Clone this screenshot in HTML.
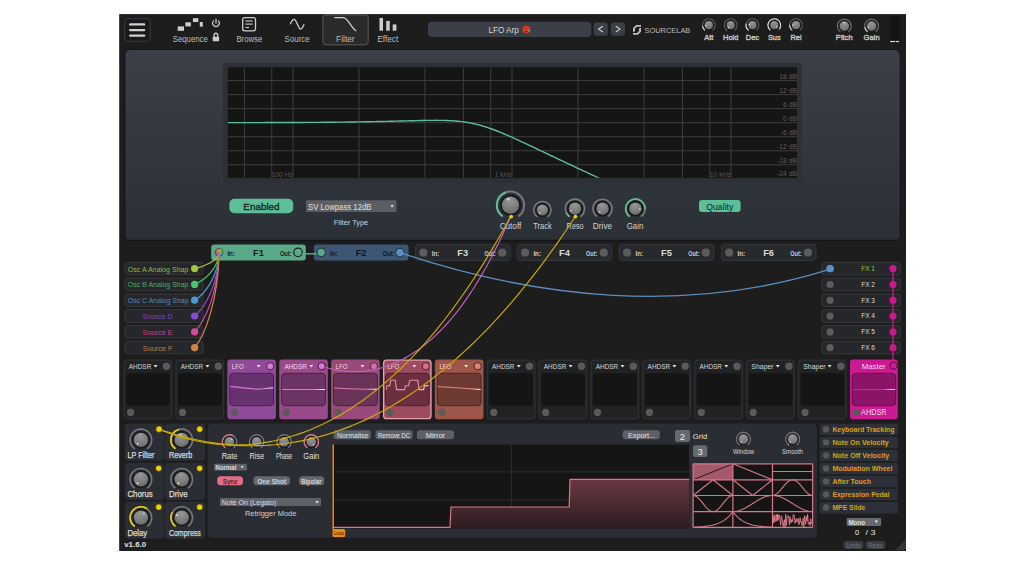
<!DOCTYPE html>
<html><head><meta charset="utf-8"><style>
html,body{margin:0;padding:0;background:#ffffff;width:1024px;height:565px;overflow:hidden}
svg{display:block}
text{font-family:"Liberation Sans",sans-serif}
</style></head><body>
<svg width="1024" height="565" viewBox="0 0 1024 565">
<defs>
<radialGradient id="kg" cx="0.45" cy="0.2" r="0.95"><stop offset="0" stop-color="#969696"/><stop offset="0.6" stop-color="#7a7a7a"/><stop offset="1" stop-color="#5e5e5e"/></radialGradient>
<linearGradient id="pg" x1="0" y1="0" x2="0" y2="1"><stop offset="0" stop-color="#3b3f48"/><stop offset="1" stop-color="#2b2f36"/></linearGradient>
<linearGradient id="stepg" gradientUnits="userSpaceOnUse" x1="0" y1="479" x2="0" y2="528"><stop offset="0" stop-color="#6a3842"/><stop offset="1" stop-color="#2c1c20"/></linearGradient>
<clipPath id="gclip"><rect x="227.8" y="67.3" width="569.2" height="110.5"/></clipPath>
</defs>
<rect x="119.20" y="14.10" width="786.80" height="536.90" rx="0" fill="#1d1d1d" />
<rect x="124.60" y="18.60" width="25.60" height="22.80" rx="3.5" fill="#1a1a1a" stroke="#30343a" stroke-width="1.3" />
<line x1="130.2" y1="24.4" x2="144.1" y2="24.4" stroke="#cfcfcf" stroke-width="2.4" stroke-linecap="round"/>
<line x1="130.2" y1="30.1" x2="144.1" y2="30.1" stroke="#cfcfcf" stroke-width="2.4" stroke-linecap="round"/>
<line x1="130.2" y1="35.6" x2="144.1" y2="35.6" stroke="#cfcfcf" stroke-width="2.4" stroke-linecap="round"/>
<rect x="177.70" y="26.40" width="6.30" height="4.40" rx="0" fill="#cdcdcd" />
<rect x="185.40" y="22.30" width="5.50" height="4.10" rx="0" fill="#cdcdcd" />
<rect x="192.90" y="18.20" width="5.40" height="3.80" rx="0" fill="#cdcdcd" />
<rect x="199.80" y="22.00" width="3.00" height="4.70" rx="0" fill="#cdcdcd" />
<text x="172.70" y="42.00" font-size="8.5" fill="#bebebe" text-anchor="start" font-weight="normal" textLength="35.10" lengthAdjust="spacingAndGlyphs" >Sequence</text>
<path d="M213.6,20.9 A3.3,3.3 0 1 0 218.4,20.9" fill="none" stroke="#cdcdcd" stroke-width="1.2" stroke-linecap="round"/>
<line x1="216" y1="19.2" x2="216" y2="23.2" stroke="#cdcdcd" stroke-width="1.2" stroke-linecap="round"/>
<path d="M214.1,37 V35 A1.8,1.8 0 0 1 217.7,35 V37" fill="none" stroke="#cdcdcd" stroke-width="1.4"/>
<rect x="212.70" y="36.80" width="6.40" height="4.40" rx="0.6" fill="#cdcdcd" />
<rect x="242.70" y="17.60" width="12.80" height="13.20" rx="2" fill="none" stroke="#cdcdcd" stroke-width="1.3" />
<line x1="245.4" y1="21" x2="252.6" y2="21" stroke="#cdcdcd" stroke-width="1.1"/>
<line x1="245.4" y1="24.1" x2="252.6" y2="24.1" stroke="#cdcdcd" stroke-width="1.1"/>
<line x1="245.4" y1="27.5" x2="249" y2="27.5" stroke="#cdcdcd" stroke-width="1.1"/>
<text x="236.40" y="42.00" font-size="8.5" fill="#bebebe" text-anchor="start" font-weight="normal" textLength="25.90" lengthAdjust="spacingAndGlyphs" >Browse</text>
<path d="M290.3,24.3 C291.6,20.8 292.8,19.3 294.2,19.3 C296.4,19.3 298.4,29.2 300.5,29.2 C301.8,29.2 302.9,27.2 304.1,24.3" fill="none" stroke="#cdcdcd" stroke-width="1.3"/>
<text x="284.60" y="42.00" font-size="8.5" fill="#bebebe" text-anchor="start" font-weight="normal" textLength="25.10" lengthAdjust="spacingAndGlyphs" >Source</text>
<rect x="322.90" y="14.90" width="45.30" height="29.90" rx="3" fill="#2a2a2a" stroke="#5b5b5b" stroke-width="1" />
<path d="M334.3,17.6 L343.5,17.6 C348,17.8 351,28 356.3,31" fill="none" stroke="#cdcdcd" stroke-width="1.3"/>
<text x="336.10" y="42.00" font-size="8.5" fill="#bebebe" text-anchor="start" font-weight="normal" textLength="18.50" lengthAdjust="spacingAndGlyphs" >Filter</text>
<rect x="379.50" y="17.90" width="3.50" height="12.80" rx="0" fill="#cdcdcd" />
<rect x="386.20" y="20.90" width="3.50" height="9.80" rx="0" fill="#cdcdcd" />
<rect x="392.70" y="24.40" width="3.70" height="6.30" rx="0" fill="#cdcdcd" />
<text x="377.40" y="42.00" font-size="8.5" fill="#bebebe" text-anchor="start" font-weight="normal" textLength="20.80" lengthAdjust="spacingAndGlyphs" >Effect</text>
<rect x="427.90" y="21.80" width="163.40" height="15.10" rx="4" fill="#3b3f47" />
<text x="488.40" y="32.60" font-size="9" fill="#d6d6d6" text-anchor="start" font-weight="normal" textLength="30.30" lengthAdjust="spacingAndGlyphs" >LFO Arp</text>
<circle cx="526.40" cy="29.60" r="3.80" fill="#e23a16" />
<path d="M524.6,32.2 q1.6,-2.6 3.2,0 z" fill="#401010"/>
<path d="M525,32.3 q1.2,-1.2 2.4,0 z" fill="#f060b0"/>
<circle cx="529.40" cy="30.40" r="0.95" fill="#30c0f0" />
<line x1="524.6" y1="28.3" x2="525.6" y2="28.6" stroke="#401010" stroke-width="0.6"/><line x1="527.9" y1="28.3" x2="526.9" y2="28.6" stroke="#401010" stroke-width="0.6"/>
<rect x="593.60" y="22.50" width="14.30" height="13.20" rx="3" fill="#3b3f47" />
<rect x="610.80" y="22.50" width="14.20" height="13.20" rx="3" fill="#3b3f47" />
<path d="M602.8,26.2 L598.6,29.1 L602.8,32" fill="none" stroke="#d0d0d0" stroke-width="1.1"/>
<path d="M615.8,26.2 L620,29.1 L615.8,32" fill="none" stroke="#d0d0d0" stroke-width="1.1"/>
<path d="M636,25 L641,25 L641,26.8 L636.8,26.8 L635,28.6 L635,31.2 L633,31.9 L633,28 Z" fill="#bdbdbd"/>
<path d="M638.9,28.4 L641,27.7 L641,31.8 L638,34.7 L633,34.7 L633,32.9 L637.2,32.9 L638.9,31.2 Z" fill="#bdbdbd"/>
<text x="644.50" y="32.80" font-size="8" fill="#bcbcbc" text-anchor="start" font-weight="normal" textLength="45.80" lengthAdjust="spacingAndGlyphs" >SOURCELAB</text>
<path d="M705.22,30.32 A6.25,6.25 0 1 1 712.38,30.32" fill="none" stroke="#5a5c60" stroke-width="1.3"/>
<path d="M705.22,30.32 A6.25,6.25 0 0 1 702.57,25.74" fill="none" stroke="#dcdcdc" stroke-width="1.3"/>
<circle cx="708.80" cy="25.20" r="5.60" fill="#18191b" />
<circle cx="708.80" cy="25.20" r="4.10" fill="url(#kg)" />
<circle cx="705.86" cy="25.46" r="0.70" fill="#e8e8e8" />
<text x="708.80" y="39.60" font-size="7.4" fill="#c8c8c8" text-anchor="middle" font-weight="normal" stroke="#c8c8c8" stroke-width="0.35">Att</text>
<path d="M727.12,30.32 A6.25,6.25 0 1 1 734.28,30.32" fill="none" stroke="#5a5c60" stroke-width="1.3"/>
<path d="M727.12,30.32 A6.25,6.25 0 0 1 726.68,29.99" fill="none" stroke="#dcdcdc" stroke-width="1.3"/>
<circle cx="730.70" cy="25.20" r="5.60" fill="#18191b" />
<circle cx="730.70" cy="25.20" r="4.10" fill="url(#kg)" />
<circle cx="728.80" cy="27.46" r="0.70" fill="#e8e8e8" />
<text x="730.70" y="39.60" font-size="7.4" fill="#c8c8c8" text-anchor="middle" font-weight="normal" stroke="#c8c8c8" stroke-width="0.35">Hold</text>
<path d="M748.82,30.32 A6.25,6.25 0 1 1 755.98,30.32" fill="none" stroke="#5a5c60" stroke-width="1.3"/>
<path d="M748.82,30.32 A6.25,6.25 0 0 1 746.36,23.58" fill="none" stroke="#dcdcdc" stroke-width="1.3"/>
<circle cx="752.40" cy="25.20" r="5.60" fill="#18191b" />
<circle cx="752.40" cy="25.20" r="4.10" fill="url(#kg)" />
<circle cx="749.55" cy="24.44" r="0.70" fill="#e8e8e8" />
<text x="752.40" y="39.60" font-size="7.4" fill="#c8c8c8" text-anchor="middle" font-weight="normal" stroke="#c8c8c8" stroke-width="0.35">Dec</text>
<path d="M770.72,30.32 A6.25,6.25 0 1 1 777.88,30.32" fill="none" stroke="#5a5c60" stroke-width="1.3"/>
<path d="M770.72,30.32 A6.25,6.25 0 1 1 779.42,28.78" fill="none" stroke="#dcdcdc" stroke-width="1.3"/>
<circle cx="774.30" cy="25.20" r="5.60" fill="#18191b" />
<circle cx="774.30" cy="25.20" r="4.10" fill="url(#kg)" />
<circle cx="776.72" cy="26.89" r="0.70" fill="#e8e8e8" />
<text x="774.30" y="39.60" font-size="7.4" fill="#c8c8c8" text-anchor="middle" font-weight="normal" stroke="#c8c8c8" stroke-width="0.35">Sus</text>
<path d="M792.42,30.32 A6.25,6.25 0 1 1 799.58,30.32" fill="none" stroke="#5a5c60" stroke-width="1.3"/>
<path d="M792.42,30.32 A6.25,6.25 0 0 1 789.77,24.66" fill="none" stroke="#dcdcdc" stroke-width="1.3"/>
<circle cx="796.00" cy="25.20" r="5.60" fill="#18191b" />
<circle cx="796.00" cy="25.20" r="4.10" fill="url(#kg)" />
<circle cx="793.06" cy="24.94" r="0.70" fill="#e8e8e8" />
<text x="796.00" y="39.60" font-size="7.4" fill="#c8c8c8" text-anchor="middle" font-weight="normal" stroke="#c8c8c8" stroke-width="0.35">Rel</text>
<path d="M840.37,31.71 A6.85,6.85 0 1 1 848.23,31.71" fill="none" stroke="#6a6c70" stroke-width="1.3"/>
<circle cx="844.30" cy="26.10" r="6.00" fill="#18191b" />
<circle cx="844.30" cy="26.10" r="4.80" fill="url(#kg)" />
<circle cx="844.30" cy="22.64" r="0.70" fill="#e8e8e8" />
<text x="844.30" y="40.40" font-size="7.6" fill="#c8c8c8" text-anchor="middle" font-weight="normal" stroke="#c8c8c8" stroke-width="0.35">Pitch</text>
<path d="M867.67,31.71 A6.85,6.85 0 1 1 875.53,31.71" fill="none" stroke="#6a6c70" stroke-width="1.3"/>
<path d="M867.67,31.71 A6.85,6.85 0 0 1 864.85,27.29" fill="none" stroke="#d8d8d8" stroke-width="1.3"/>
<circle cx="871.60" cy="26.10" r="6.00" fill="#18191b" />
<circle cx="871.60" cy="26.10" r="4.80" fill="url(#kg)" />
<circle cx="868.35" cy="27.28" r="0.70" fill="#e8e8e8" />
<text x="871.60" y="40.40" font-size="7.6" fill="#c8c8c8" text-anchor="middle" font-weight="normal" stroke="#c8c8c8" stroke-width="0.35">Gain</text>
<rect x="889.70" y="16.30" width="9.80" height="25.90" rx="0" fill="#141414" />
<rect x="890.20" y="40.90" width="5.10" height="1.20" rx="0" fill="#dcdcdc" />
<rect x="896.00" y="40.90" width="3.00" height="1.20" rx="0" fill="#dcdcdc" />
<rect x="124.40" y="49.00" width="776.30" height="192.20" rx="6" fill="#141518" />
<rect x="125.40" y="50.00" width="774.30" height="190.40" rx="5" fill="url(#pg)" />
<line x1="127" y1="240.3" x2="898" y2="240.3" stroke="#141518" stroke-width="1.2"/>
<rect x="222.90" y="63.00" width="578.90" height="120.30" rx="4" fill="#2d3137" />
<rect x="227.80" y="67.30" width="569.20" height="110.80" rx="0" fill="#151515" />
<line x1="244.42" y1="67.3" x2="244.42" y2="178.1" stroke="#3e3e3e" stroke-width="1"/>
<line x1="271.78" y1="67.3" x2="271.78" y2="178.1" stroke="#3e3e3e" stroke-width="1"/>
<line x1="293.00" y1="67.3" x2="293.00" y2="178.1" stroke="#3e3e3e" stroke-width="1"/>
<line x1="358.93" y1="67.3" x2="358.93" y2="178.1" stroke="#3e3e3e" stroke-width="1"/>
<line x1="424.85" y1="67.3" x2="424.85" y2="178.1" stroke="#3e3e3e" stroke-width="1"/>
<line x1="463.42" y1="67.3" x2="463.42" y2="178.1" stroke="#3e3e3e" stroke-width="1"/>
<line x1="490.78" y1="67.3" x2="490.78" y2="178.1" stroke="#3e3e3e" stroke-width="1"/>
<line x1="512.00" y1="67.3" x2="512.00" y2="178.1" stroke="#3e3e3e" stroke-width="1"/>
<line x1="577.93" y1="67.3" x2="577.93" y2="178.1" stroke="#3e3e3e" stroke-width="1"/>
<line x1="643.85" y1="67.3" x2="643.85" y2="178.1" stroke="#3e3e3e" stroke-width="1"/>
<line x1="682.42" y1="67.3" x2="682.42" y2="178.1" stroke="#3e3e3e" stroke-width="1"/>
<line x1="709.78" y1="67.3" x2="709.78" y2="178.1" stroke="#3e3e3e" stroke-width="1"/>
<line x1="731.00" y1="67.3" x2="731.00" y2="178.1" stroke="#3e3e3e" stroke-width="1"/>
<line x1="227.8" y1="80.60" x2="797" y2="80.60" stroke="#3e3e3e" stroke-width="1"/>
<line x1="227.8" y1="94.63" x2="797" y2="94.63" stroke="#3e3e3e" stroke-width="1"/>
<line x1="227.8" y1="108.66" x2="797" y2="108.66" stroke="#3e3e3e" stroke-width="1"/>
<line x1="227.8" y1="122.69" x2="797" y2="122.69" stroke="#3e3e3e" stroke-width="1"/>
<line x1="227.8" y1="136.72" x2="797" y2="136.72" stroke="#3e3e3e" stroke-width="1"/>
<line x1="227.8" y1="150.75" x2="797" y2="150.75" stroke="#3e3e3e" stroke-width="1"/>
<line x1="227.8" y1="164.78" x2="797" y2="164.78" stroke="#3e3e3e" stroke-width="1"/>
<text x="797.00" y="78.60" font-size="6.8" fill="#5e5e5e" text-anchor="end" font-weight="normal" >18 dB</text>
<text x="797.00" y="92.63" font-size="6.8" fill="#5e5e5e" text-anchor="end" font-weight="normal" >12 dB</text>
<text x="797.00" y="106.66" font-size="6.8" fill="#5e5e5e" text-anchor="end" font-weight="normal" >6 dB</text>
<text x="797.00" y="120.69" font-size="6.8" fill="#5e5e5e" text-anchor="end" font-weight="normal" >0 dB</text>
<text x="797.00" y="134.72" font-size="6.8" fill="#5e5e5e" text-anchor="end" font-weight="normal" >-6 dB</text>
<text x="797.00" y="148.75" font-size="6.8" fill="#5e5e5e" text-anchor="end" font-weight="normal" >-12 dB</text>
<text x="797.00" y="162.78" font-size="6.8" fill="#5e5e5e" text-anchor="end" font-weight="normal" >-18 dB</text>
<text x="797.00" y="176.10" font-size="6.8" fill="#5e5e5e" text-anchor="end" font-weight="normal" >-24 dB</text>
<text x="293.00" y="177.10" font-size="6.8" fill="#575757" text-anchor="end" font-weight="normal" >100 Hz</text>
<text x="512.00" y="177.10" font-size="6.8" fill="#575757" text-anchor="end" font-weight="normal" >1 kHz</text>
<text x="731.00" y="177.10" font-size="6.8" fill="#575757" text-anchor="end" font-weight="normal" >10 kHz</text>
<path d="M227.80,122.64 L229.80,122.63 L231.80,122.63 L233.80,122.63 L235.80,122.63 L237.80,122.62 L239.80,122.62 L241.80,122.62 L243.80,122.62 L245.80,122.61 L247.80,122.61 L249.80,122.61 L251.80,122.60 L253.80,122.60 L255.80,122.59 L257.80,122.59 L259.80,122.59 L261.80,122.58 L263.80,122.58 L265.80,122.57 L267.80,122.57 L269.80,122.56 L271.80,122.56 L273.80,122.55 L275.80,122.54 L277.80,122.54 L279.80,122.53 L281.80,122.53 L283.80,122.52 L285.80,122.51 L287.80,122.50 L289.80,122.50 L291.80,122.49 L293.80,122.48 L295.80,122.47 L297.80,122.46 L299.80,122.45 L301.80,122.44 L303.80,122.43 L305.80,122.42 L307.80,122.41 L309.80,122.40 L311.80,122.38 L313.80,122.37 L315.80,122.36 L317.80,122.34 L319.80,122.33 L321.80,122.31 L323.80,122.30 L325.80,122.28 L327.80,122.27 L329.80,122.25 L331.80,122.23 L333.80,122.21 L335.80,122.19 L337.80,122.17 L339.80,122.15 L341.80,122.13 L343.80,122.10 L345.80,122.08 L347.80,122.06 L349.80,122.03 L351.80,122.00 L353.80,121.98 L355.80,121.95 L357.80,121.92 L359.80,121.89 L361.80,121.86 L363.80,121.82 L365.80,121.79 L367.80,121.75 L369.80,121.72 L371.80,121.68 L373.80,121.64 L375.80,121.60 L377.80,121.56 L379.80,121.52 L381.80,121.48 L383.80,121.43 L385.80,121.39 L387.80,121.34 L389.80,121.29 L391.80,121.25 L393.80,121.20 L395.80,121.15 L397.80,121.09 L399.80,121.04 L401.80,120.99 L403.80,120.94 L405.80,120.89 L407.80,120.83 L409.80,120.78 L411.80,120.73 L413.80,120.68 L415.80,120.63 L417.80,120.58 L419.80,120.53 L421.80,120.49 L423.80,120.45 L425.80,120.42 L427.80,120.38 L429.80,120.36 L431.80,120.34 L433.80,120.33 L435.80,120.32 L437.80,120.33 L439.80,120.34 L441.80,120.37 L443.80,120.41 L445.80,120.47 L447.80,120.54 L449.80,120.63 L451.80,120.74 L453.80,120.87 L455.80,121.02 L457.80,121.20 L459.80,121.41 L461.80,121.64 L463.80,121.90 L465.80,122.20 L467.80,122.52 L469.80,122.88 L471.80,123.27 L473.80,123.70 L475.80,124.16 L477.80,124.65 L479.80,125.18 L481.80,125.74 L483.80,126.33 L485.80,126.96 L487.80,127.61 L489.80,128.29 L491.80,129.00 L493.80,129.74 L495.80,130.49 L497.80,131.27 L499.80,132.08 L501.80,132.90 L503.80,133.73 L505.80,134.58 L507.80,135.45 L509.80,136.33 L511.80,137.22 L513.80,138.12 L515.80,139.03 L517.80,139.94 L519.80,140.86 L521.80,141.79 L523.80,142.73 L525.80,143.66 L527.80,144.60 L529.80,145.55 L531.80,146.49 L533.80,147.44 L535.80,148.39 L537.80,149.34 L539.80,150.29 L541.80,151.24 L543.80,152.19 L545.80,153.14 L547.80,154.10 L549.80,155.05 L551.80,156.00 L553.80,156.94 L555.80,157.89 L557.80,158.84 L559.80,159.79 L561.80,160.73 L563.80,161.68 L565.80,162.62 L567.80,163.56 L569.80,164.50 L571.80,165.44 L573.80,166.38 L575.80,167.32 L577.80,168.26 L579.80,169.19 L581.80,170.13 L583.80,171.06 L585.80,171.99 L587.80,172.92 L589.80,173.85 L591.80,174.78 L593.80,175.71 L595.80,176.63 L597.80,177.56 L599.80,178.48 L601.80,179.41 L603.80,180.10" fill="none" stroke="#5cbf98" stroke-width="1.4" clip-path="url(#gclip)"/>
<rect x="229.40" y="198.70" width="63.80" height="14.60" rx="5" fill="#5cbf98" />
<text x="243.30" y="209.70" font-size="9.8" fill="#15251d" text-anchor="start" font-weight="normal" textLength="36.30" lengthAdjust="spacingAndGlyphs" stroke="#15251d" stroke-width="0.3">Enabled</text>
<rect x="305.90" y="200.20" width="90.50" height="11.80" rx="1" fill="#5b5e63" />
<text x="308.00" y="209.60" font-size="8.5" fill="#e0e0e0" text-anchor="start" font-weight="normal" textLength="63.50" lengthAdjust="spacingAndGlyphs" >SV Lowpass 12dB</text>
<path d="M390.2,205.2 L394,205.2 L392.1,207.6 z" fill="#e8e8e8"/>
<text x="351.00" y="225.20" font-size="7.5" fill="#d0d0d0" text-anchor="middle" font-weight="normal" textLength="34.50" lengthAdjust="spacingAndGlyphs" >Filter Type</text>
<path d="M502.67,216.38 A13.65,13.65 0 1 1 518.33,216.38" fill="none" stroke="#77797d" stroke-width="1.9"/>
<path d="M502.67,216.38 A13.65,13.65 0 0 1 505.83,192.37" fill="none" stroke="#5cbf98" stroke-width="1.9"/>
<circle cx="510.50" cy="205.20" r="10.70" fill="#18191b" />
<circle cx="510.50" cy="205.20" r="8.60" fill="url(#kg)" />
<circle cx="508.38" cy="199.38" r="1.12" fill="#e8e8e8" />
<path d="M537.50,217.00 A8.55,8.55 0 1 1 547.30,217.00" fill="none" stroke="#77797d" stroke-width="1.5"/>
<circle cx="542.40" cy="210.00" r="7.20" fill="#18191b" />
<circle cx="542.40" cy="210.00" r="5.60" fill="url(#kg)" />
<circle cx="539.81" cy="213.09" r="0.73" fill="#e8e8e8" />
<path d="M569.49,216.56 A9.60,9.60 0 1 1 580.51,216.56" fill="none" stroke="#77797d" stroke-width="1.6"/>
<path d="M569.49,216.56 A9.60,9.60 0 0 1 566.52,213.21" fill="none" stroke="#5cbf98" stroke-width="1.6"/>
<circle cx="575.00" cy="208.70" r="8.00" fill="#18191b" />
<circle cx="575.00" cy="208.70" r="6.20" fill="url(#kg)" />
<circle cx="571.06" cy="210.80" r="0.81" fill="#e8e8e8" />
<path d="M597.05,216.48 A9.50,9.50 0 1 1 607.95,216.48" fill="none" stroke="#77797d" stroke-width="1.6"/>
<circle cx="602.50" cy="208.70" r="8.00" fill="#18191b" />
<circle cx="602.50" cy="208.70" r="6.20" fill="url(#kg)" />
<circle cx="599.63" cy="212.12" r="0.81" fill="#e8e8e8" />
<path d="M629.84,216.65 A9.70,9.70 0 1 1 640.96,216.65" fill="none" stroke="#77797d" stroke-width="1.6"/>
<path d="M629.84,216.65 A9.70,9.70 0 1 1 645.06,209.55" fill="none" stroke="#5cbf98" stroke-width="1.6"/>
<circle cx="635.40" cy="208.70" r="8.00" fill="#18191b" />
<circle cx="635.40" cy="208.70" r="6.20" fill="url(#kg)" />
<circle cx="639.85" cy="209.09" r="0.81" fill="#e8e8e8" />
<text x="499.70" y="229.20" font-size="8.5" fill="#d4d4d4" text-anchor="start" font-weight="normal" textLength="21.60" lengthAdjust="spacingAndGlyphs" >Cutoff</text>
<text x="533.30" y="229.20" font-size="8.5" fill="#d4d4d4" text-anchor="start" font-weight="normal" textLength="18.40" lengthAdjust="spacingAndGlyphs" >Track</text>
<text x="566.60" y="229.20" font-size="8.5" fill="#d4d4d4" text-anchor="start" font-weight="normal" textLength="17.10" lengthAdjust="spacingAndGlyphs" >Reso</text>
<text x="592.80" y="229.20" font-size="8.5" fill="#d4d4d4" text-anchor="start" font-weight="normal" textLength="19.40" lengthAdjust="spacingAndGlyphs" >Drive</text>
<text x="626.70" y="229.20" font-size="8.5" fill="#d4d4d4" text-anchor="start" font-weight="normal" textLength="16.70" lengthAdjust="spacingAndGlyphs" >Gain</text>
<rect x="699.00" y="200.00" width="41.60" height="12.00" rx="3" fill="#5cbf98" />
<text x="706.20" y="209.50" font-size="9" fill="#15251d" text-anchor="start" font-weight="normal" textLength="27.20" lengthAdjust="spacingAndGlyphs" >Quality</text>
<rect x="211.20" y="244.40" width="94.60" height="16.10" rx="3" fill="#5aa98a" />
<text x="227.40" y="256.20" font-size="6.5" fill="#102018" text-anchor="start" font-weight="bold" textLength="7.60" lengthAdjust="spacingAndGlyphs" >In:</text>
<text x="258.40" y="256.30" font-size="9.3" fill="#102018" text-anchor="middle" font-weight="bold" >F1</text>
<text x="280.10" y="256.20" font-size="6.5" fill="#102018" text-anchor="start" font-weight="bold" textLength="11.30" lengthAdjust="spacingAndGlyphs" >Out:</text>
<rect x="313.90" y="244.40" width="94.60" height="16.10" rx="3" fill="#3c5674" />
<text x="330.10" y="256.20" font-size="6.5" fill="#101820" text-anchor="start" font-weight="bold" textLength="7.60" lengthAdjust="spacingAndGlyphs" >In:</text>
<text x="361.10" y="256.30" font-size="9.3" fill="#101820" text-anchor="middle" font-weight="bold" >F2</text>
<text x="382.80" y="256.20" font-size="6.5" fill="#101820" text-anchor="start" font-weight="bold" textLength="11.30" lengthAdjust="spacingAndGlyphs" >Out:</text>
<rect x="415.60" y="244.40" width="94.60" height="16.10" rx="3" fill="#27292c" stroke="#34373b" stroke-width="1" />
<text x="431.80" y="256.20" font-size="6.5" fill="#d0d0d0" text-anchor="start" font-weight="bold" textLength="7.60" lengthAdjust="spacingAndGlyphs" >In:</text>
<text x="462.80" y="256.30" font-size="9.3" fill="#d8d8d8" text-anchor="middle" font-weight="bold" >F3</text>
<text x="484.50" y="256.20" font-size="6.5" fill="#d0d0d0" text-anchor="start" font-weight="bold" textLength="11.30" lengthAdjust="spacingAndGlyphs" >Out:</text>
<circle cx="423.40" cy="252.50" r="4.10" fill="#5c5c5c" />
<circle cx="502.20" cy="252.50" r="4.10" fill="#5c5c5c" />
<rect x="517.20" y="244.40" width="94.60" height="16.10" rx="3" fill="#27292c" stroke="#34373b" stroke-width="1" />
<text x="533.40" y="256.20" font-size="6.5" fill="#d0d0d0" text-anchor="start" font-weight="bold" textLength="7.60" lengthAdjust="spacingAndGlyphs" >In:</text>
<text x="564.40" y="256.30" font-size="9.3" fill="#d8d8d8" text-anchor="middle" font-weight="bold" >F4</text>
<text x="586.10" y="256.20" font-size="6.5" fill="#d0d0d0" text-anchor="start" font-weight="bold" textLength="11.30" lengthAdjust="spacingAndGlyphs" >Out:</text>
<circle cx="525.00" cy="252.50" r="4.10" fill="#5c5c5c" />
<circle cx="603.80" cy="252.50" r="4.10" fill="#5c5c5c" />
<rect x="619.30" y="244.40" width="94.60" height="16.10" rx="3" fill="#27292c" stroke="#34373b" stroke-width="1" />
<text x="635.50" y="256.20" font-size="6.5" fill="#d0d0d0" text-anchor="start" font-weight="bold" textLength="7.60" lengthAdjust="spacingAndGlyphs" >In:</text>
<text x="666.50" y="256.30" font-size="9.3" fill="#d8d8d8" text-anchor="middle" font-weight="bold" >F5</text>
<text x="688.20" y="256.20" font-size="6.5" fill="#d0d0d0" text-anchor="start" font-weight="bold" textLength="11.30" lengthAdjust="spacingAndGlyphs" >Out:</text>
<circle cx="627.10" cy="252.50" r="4.10" fill="#5c5c5c" />
<circle cx="705.90" cy="252.50" r="4.10" fill="#5c5c5c" />
<rect x="721.40" y="244.40" width="94.60" height="16.10" rx="3" fill="#27292c" stroke="#34373b" stroke-width="1" />
<text x="737.60" y="256.20" font-size="6.5" fill="#d0d0d0" text-anchor="start" font-weight="bold" textLength="7.60" lengthAdjust="spacingAndGlyphs" >In:</text>
<text x="768.60" y="256.30" font-size="9.3" fill="#d8d8d8" text-anchor="middle" font-weight="bold" >F6</text>
<text x="790.30" y="256.20" font-size="6.5" fill="#d0d0d0" text-anchor="start" font-weight="bold" textLength="11.30" lengthAdjust="spacingAndGlyphs" >Out:</text>
<circle cx="729.20" cy="252.50" r="4.10" fill="#5c5c5c" />
<circle cx="808.00" cy="252.50" r="4.10" fill="#5c5c5c" />
<path d="M219,252.4 L219.00,248.50 A3.9,3.9 0 0 1 222.38,250.45 z" fill="#a4c43c"/>
<path d="M219,252.4 L222.38,250.45 A3.9,3.9 0 0 1 222.38,254.35 z" fill="#4cc46c"/>
<path d="M219,252.4 L222.38,254.35 A3.9,3.9 0 0 1 219.00,256.30 z" fill="#4a9ad4"/>
<path d="M219,252.4 L219.00,256.30 A3.9,3.9 0 0 1 215.62,254.35 z" fill="#8a4ad4"/>
<path d="M219,252.4 L215.62,254.35 A3.9,3.9 0 0 1 215.62,250.45 z" fill="#d44a9a"/>
<path d="M219,252.4 L215.62,250.45 A3.9,3.9 0 0 1 219.00,248.50 z" fill="#d4844a"/>
<circle cx="219.00" cy="252.40" r="3.90" fill="none" stroke="#2a4a3a" stroke-width="0.8" />
<circle cx="298.00" cy="252.40" r="4.30" fill="none" stroke="#102018" stroke-width="1.1" />
<line x1="302.3" y1="253.8" x2="317" y2="253.8" stroke="#5aa98a" stroke-width="1.5"/>
<circle cx="321.20" cy="252.40" r="4.20" fill="#5aa98a" stroke="#22302a" stroke-width="1" />
<circle cx="399.90" cy="252.60" r="4.30" fill="#5b8fc0" stroke="#1a2838" stroke-width="1" />
<rect x="124.90" y="262.40" width="78.20" height="12.40" rx="2.5" fill="#25272b" stroke="#35383c" stroke-width="1" />
<text x="127.80" y="271.60" font-size="7.3" fill="#98b440" text-anchor="start" font-weight="normal" textLength="60.70" lengthAdjust="spacingAndGlyphs" >Osc A Analog Shap</text>
<rect x="124.90" y="278.20" width="78.20" height="12.40" rx="2.5" fill="#25272b" stroke="#35383c" stroke-width="1" />
<text x="127.80" y="287.40" font-size="7.3" fill="#48b068" text-anchor="start" font-weight="normal" textLength="60.70" lengthAdjust="spacingAndGlyphs" >Osc B Analog Shap</text>
<rect x="124.90" y="294.00" width="78.20" height="12.40" rx="2.5" fill="#25272b" stroke="#35383c" stroke-width="1" />
<text x="127.80" y="303.20" font-size="7.3" fill="#4a8cc0" text-anchor="start" font-weight="normal" textLength="60.70" lengthAdjust="spacingAndGlyphs" >Osc C Analog Shap</text>
<rect x="124.90" y="309.80" width="78.20" height="12.40" rx="2.5" fill="#25272b" stroke="#35383c" stroke-width="1" />
<text x="157.60" y="319.00" font-size="7.3" fill="#7c48c0" text-anchor="middle" font-weight="normal" >Source D</text>
<rect x="124.90" y="325.60" width="78.20" height="12.40" rx="2.5" fill="#25272b" stroke="#35383c" stroke-width="1" />
<text x="157.60" y="334.80" font-size="7.3" fill="#c04890" text-anchor="middle" font-weight="normal" >Source E</text>
<rect x="124.90" y="341.40" width="78.20" height="12.40" rx="2.5" fill="#25272b" stroke="#35383c" stroke-width="1" />
<text x="157.60" y="350.60" font-size="7.3" fill="#c07a48" text-anchor="middle" font-weight="normal" >Source F</text>
<rect x="821.80" y="262.40" width="78.60" height="12.50" rx="2.5" fill="#25272b" stroke="#35383c" stroke-width="1" />
<circle cx="830.10" cy="268.70" r="3.60" fill="#5b8fc0" />
<text x="868.10" y="271.00" font-size="6.9" fill="#9bc24a" text-anchor="middle" font-weight="normal" textLength="13.90" lengthAdjust="spacingAndGlyphs" >FX 1</text>
<rect x="821.80" y="278.20" width="78.60" height="12.50" rx="2.5" fill="#25272b" stroke="#35383c" stroke-width="1" />
<circle cx="830.10" cy="284.50" r="3.60" fill="#5c5c5c" />
<text x="868.10" y="286.80" font-size="6.9" fill="#dcdcdc" text-anchor="middle" font-weight="normal" textLength="13.90" lengthAdjust="spacingAndGlyphs" >FX 2</text>
<rect x="821.80" y="294.00" width="78.60" height="12.50" rx="2.5" fill="#25272b" stroke="#35383c" stroke-width="1" />
<circle cx="830.10" cy="300.30" r="3.60" fill="#5c5c5c" />
<text x="868.10" y="302.60" font-size="6.9" fill="#dcdcdc" text-anchor="middle" font-weight="normal" textLength="13.90" lengthAdjust="spacingAndGlyphs" >FX 3</text>
<rect x="821.80" y="309.80" width="78.60" height="12.50" rx="2.5" fill="#25272b" stroke="#35383c" stroke-width="1" />
<circle cx="830.10" cy="316.10" r="3.60" fill="#5c5c5c" />
<text x="868.10" y="318.40" font-size="6.9" fill="#dcdcdc" text-anchor="middle" font-weight="normal" textLength="13.90" lengthAdjust="spacingAndGlyphs" >FX 4</text>
<rect x="821.80" y="325.60" width="78.60" height="12.50" rx="2.5" fill="#25272b" stroke="#35383c" stroke-width="1" />
<circle cx="830.10" cy="331.90" r="3.60" fill="#5c5c5c" />
<text x="868.10" y="334.20" font-size="6.9" fill="#dcdcdc" text-anchor="middle" font-weight="normal" textLength="13.90" lengthAdjust="spacingAndGlyphs" >FX 5</text>
<rect x="821.80" y="341.40" width="78.60" height="12.50" rx="2.5" fill="#25272b" stroke="#35383c" stroke-width="1" />
<circle cx="830.10" cy="347.70" r="3.60" fill="#5c5c5c" />
<text x="868.10" y="350.00" font-size="6.9" fill="#dcdcdc" text-anchor="middle" font-weight="normal" textLength="13.90" lengthAdjust="spacingAndGlyphs" >FX 6</text>
<rect x="124.10" y="360.10" width="47.60" height="58.70" rx="3" fill="#212224" stroke="#333539" stroke-width="1" />
<rect x="126.00" y="373.30" width="43.80" height="32.40" rx="3.5" fill="#151515" />
<circle cx="130.60" cy="412.40" r="3.60" fill="#5a5a5a" />
<circle cx="166.40" cy="366.20" r="3.70" fill="#5a5a5a" />
<text x="128.80" y="368.70" font-size="6.8" fill="#d8d8d8" text-anchor="start" font-weight="normal" textLength="22.50" lengthAdjust="spacingAndGlyphs" >AHDSR</text>
<path d="M153.60,364.9 L157.60,364.9 L155.60,367.6 z" fill="#e0e0e0"/>
<rect x="175.98" y="360.10" width="47.60" height="58.70" rx="3" fill="#212224" stroke="#333539" stroke-width="1" />
<rect x="177.88" y="373.30" width="43.80" height="32.40" rx="3.5" fill="#151515" />
<circle cx="182.48" cy="412.40" r="3.60" fill="#5a5a5a" />
<circle cx="218.28" cy="366.20" r="3.70" fill="#5a5a5a" />
<text x="180.68" y="368.70" font-size="6.8" fill="#d8d8d8" text-anchor="start" font-weight="normal" textLength="22.50" lengthAdjust="spacingAndGlyphs" >AHDSR</text>
<path d="M205.48,364.9 L209.48,364.9 L207.48,367.6 z" fill="#e0e0e0"/>
<rect x="227.36" y="359.60" width="48.60" height="59.70" rx="3" fill="#8f4a9a" />
<rect x="229.76" y="373.30" width="43.80" height="32.40" rx="3.5" fill="#683270" stroke="#3c1c30" stroke-width="0.8" />
<circle cx="234.36" cy="412.40" r="3.60" fill="#585c58" />
<circle cx="270.16" cy="366.20" r="3.60" fill="#d878d8" stroke="#3a1a30" stroke-width="0.9" />
<text x="231.86" y="368.70" font-size="6.8" fill="#f0dce8" text-anchor="start" font-weight="normal" textLength="11.80" lengthAdjust="spacingAndGlyphs" >LFO</text>
<path d="M256.66,364.9 L260.66,364.9 L258.66,367.6 z" fill="#f0e0ea"/>
<defs><linearGradient id="lgm2" gradientUnits="userSpaceOnUse" x1="230.16" x2="273.16" y1="0" y2="0"><stop offset="0" stop-color="#d878d8"/><stop offset="0.75" stop-color="#d878d8"/><stop offset="1" stop-color="#ffffff"/></linearGradient></defs>
<path d="M230.16,386.6 C245.16,387.6 252.16,389.6 260.16,389 S269.16,387.8 273.16,387.8" fill="none" stroke="url(#lgm2)" stroke-width="1.1"/>
<rect x="279.24" y="359.60" width="48.60" height="59.70" rx="3" fill="#9a4a8c" />
<rect x="281.64" y="373.30" width="43.80" height="32.40" rx="3.5" fill="#6c3464" stroke="#3c1c30" stroke-width="0.8" />
<circle cx="286.24" cy="412.40" r="3.60" fill="#585c58" />
<circle cx="322.04" cy="366.20" r="3.60" fill="#d878d0" stroke="#3a1a30" stroke-width="0.9" />
<text x="284.44" y="368.70" font-size="6.8" fill="#f0dce8" text-anchor="start" font-weight="normal" textLength="22.50" lengthAdjust="spacingAndGlyphs" >AHDSR</text>
<path d="M309.24,364.9 L313.24,364.9 L311.24,367.6 z" fill="#f0e0ea"/>
<defs><linearGradient id="lgm3" gradientUnits="userSpaceOnUse" x1="282.04" x2="325.04" y1="0" y2="0"><stop offset="0" stop-color="#d878d0"/><stop offset="0.75" stop-color="#d878d0"/><stop offset="1" stop-color="#ffffff"/></linearGradient></defs>
<path d="M282.04,389.5 L325.04,389.5" fill="none" stroke="url(#lgm3)" stroke-width="1.1"/>
<rect x="331.12" y="359.60" width="48.60" height="59.70" rx="3" fill="#9a4a7a" />
<rect x="333.52" y="373.30" width="43.80" height="32.40" rx="3.5" fill="#6a3458" stroke="#3c1c30" stroke-width="0.8" />
<circle cx="338.12" cy="412.40" r="3.60" fill="#585c58" />
<circle cx="373.92" cy="366.20" r="3.60" fill="#d870a8" stroke="#3a1a30" stroke-width="0.9" />
<text x="335.62" y="368.70" font-size="6.8" fill="#f0dce8" text-anchor="start" font-weight="normal" textLength="11.80" lengthAdjust="spacingAndGlyphs" >LFO</text>
<path d="M360.42,364.9 L364.42,364.9 L362.42,367.6 z" fill="#f0e0ea"/>
<defs><linearGradient id="lgm4" gradientUnits="userSpaceOnUse" x1="333.92" x2="376.92" y1="0" y2="0"><stop offset="0" stop-color="#dc78b0"/><stop offset="0.75" stop-color="#dc78b0"/><stop offset="1" stop-color="#ffffff"/></linearGradient></defs>
<path d="M333.92,388 C348.92,388.7 358.92,389.3 376.92,389.2" fill="none" stroke="url(#lgm4)" stroke-width="1.1"/>
<rect x="383.60" y="360.20" width="47.40" height="58.50" rx="3" fill="#9c4c5e" stroke="#e8a0b0" stroke-width="1.3" />
<rect x="385.40" y="373.30" width="43.80" height="32.40" rx="3.5" fill="#6a3040" stroke="#3c1c30" stroke-width="0.8" />
<circle cx="390.00" cy="412.40" r="3.60" fill="#585c58" />
<circle cx="425.80" cy="366.20" r="3.60" fill="#dc7080" stroke="#3a1a30" stroke-width="0.9" />
<text x="387.50" y="368.70" font-size="6.8" fill="#f0dce8" text-anchor="start" font-weight="normal" textLength="11.80" lengthAdjust="spacingAndGlyphs" >LFO</text>
<path d="M412.30,364.9 L416.30,364.9 L414.30,367.6 z" fill="#f0e0ea"/>
<defs><linearGradient id="lgm5" gradientUnits="userSpaceOnUse" x1="385.80" x2="428.80" y1="0" y2="0"><stop offset="0" stop-color="#e890a0"/><stop offset="0.75" stop-color="#e890a0"/><stop offset="1" stop-color="#ffffff"/></linearGradient></defs>
<path d="M386.1,389.6 L386.9,385.7 L389.7,385.7 L390.9,380.2 L395.2,380.2 L396.6,389.6 L404.6,389.6 L405.4,385.7 L408.5,385.7 L409.8,380.2 L417.8,380.2 L419,389.6 L423.6,389.6 L424.4,385.7 L428.6,385.7" fill="none" stroke="url(#lgm5)" stroke-width="1.1"/>
<rect x="434.88" y="359.60" width="48.60" height="59.70" rx="3" fill="#9e5648" />
<rect x="437.28" y="373.30" width="43.80" height="32.40" rx="3.5" fill="#6c3a32" stroke="#3c1c30" stroke-width="0.8" />
<circle cx="441.88" cy="412.40" r="3.60" fill="#585c58" />
<circle cx="477.68" cy="366.20" r="3.60" fill="#e08270" stroke="#3a1a30" stroke-width="0.9" />
<text x="439.38" y="368.70" font-size="6.8" fill="#f0dce8" text-anchor="start" font-weight="normal" textLength="11.80" lengthAdjust="spacingAndGlyphs" >LFO</text>
<path d="M464.18,364.9 L468.18,364.9 L466.18,367.6 z" fill="#f0e0ea"/>
<defs><linearGradient id="lgm6" gradientUnits="userSpaceOnUse" x1="437.68" x2="480.68" y1="0" y2="0"><stop offset="0" stop-color="#e08878"/><stop offset="0.75" stop-color="#e08878"/><stop offset="1" stop-color="#ffffff"/></linearGradient></defs>
<path d="M437.68,386.5 L480.68,389.5" fill="none" stroke="url(#lgm6)" stroke-width="1.1"/>
<rect x="487.26" y="360.10" width="47.60" height="58.70" rx="3" fill="#212224" stroke="#333539" stroke-width="1" />
<rect x="489.16" y="373.30" width="43.80" height="32.40" rx="3.5" fill="#151515" />
<circle cx="493.76" cy="412.40" r="3.60" fill="#5a5a5a" />
<circle cx="529.56" cy="366.20" r="3.70" fill="#5a5a5a" />
<text x="491.96" y="368.70" font-size="6.8" fill="#d8d8d8" text-anchor="start" font-weight="normal" textLength="22.50" lengthAdjust="spacingAndGlyphs" >AHDSR</text>
<path d="M516.76,364.9 L520.76,364.9 L518.76,367.6 z" fill="#e0e0e0"/>
<rect x="539.14" y="360.10" width="47.60" height="58.70" rx="3" fill="#212224" stroke="#333539" stroke-width="1" />
<rect x="541.04" y="373.30" width="43.80" height="32.40" rx="3.5" fill="#151515" />
<circle cx="545.64" cy="412.40" r="3.60" fill="#5a5a5a" />
<circle cx="581.44" cy="366.20" r="3.70" fill="#5a5a5a" />
<text x="543.84" y="368.70" font-size="6.8" fill="#d8d8d8" text-anchor="start" font-weight="normal" textLength="22.50" lengthAdjust="spacingAndGlyphs" >AHDSR</text>
<path d="M568.64,364.9 L572.64,364.9 L570.64,367.6 z" fill="#e0e0e0"/>
<rect x="591.02" y="360.10" width="47.60" height="58.70" rx="3" fill="#212224" stroke="#333539" stroke-width="1" />
<rect x="592.92" y="373.30" width="43.80" height="32.40" rx="3.5" fill="#151515" />
<circle cx="597.52" cy="412.40" r="3.60" fill="#5a5a5a" />
<circle cx="633.32" cy="366.20" r="3.70" fill="#5a5a5a" />
<text x="595.72" y="368.70" font-size="6.8" fill="#d8d8d8" text-anchor="start" font-weight="normal" textLength="22.50" lengthAdjust="spacingAndGlyphs" >AHDSR</text>
<path d="M620.52,364.9 L624.52,364.9 L622.52,367.6 z" fill="#e0e0e0"/>
<rect x="642.90" y="360.10" width="47.60" height="58.70" rx="3" fill="#212224" stroke="#333539" stroke-width="1" />
<rect x="644.80" y="373.30" width="43.80" height="32.40" rx="3.5" fill="#151515" />
<circle cx="649.40" cy="412.40" r="3.60" fill="#5a5a5a" />
<circle cx="685.20" cy="366.20" r="3.70" fill="#5a5a5a" />
<text x="647.60" y="368.70" font-size="6.8" fill="#d8d8d8" text-anchor="start" font-weight="normal" textLength="22.50" lengthAdjust="spacingAndGlyphs" >AHDSR</text>
<path d="M672.40,364.9 L676.40,364.9 L674.40,367.6 z" fill="#e0e0e0"/>
<rect x="694.78" y="360.10" width="47.60" height="58.70" rx="3" fill="#212224" stroke="#333539" stroke-width="1" />
<rect x="696.68" y="373.30" width="43.80" height="32.40" rx="3.5" fill="#151515" />
<circle cx="701.28" cy="412.40" r="3.60" fill="#5a5a5a" />
<circle cx="737.08" cy="366.20" r="3.70" fill="#5a5a5a" />
<text x="699.48" y="368.70" font-size="6.8" fill="#d8d8d8" text-anchor="start" font-weight="normal" textLength="22.50" lengthAdjust="spacingAndGlyphs" >AHDSR</text>
<path d="M724.28,364.9 L728.28,364.9 L726.28,367.6 z" fill="#e0e0e0"/>
<rect x="746.66" y="360.10" width="47.60" height="58.70" rx="3" fill="#212224" stroke="#333539" stroke-width="1" />
<rect x="748.56" y="373.30" width="43.80" height="32.40" rx="3.5" fill="#151515" />
<circle cx="753.16" cy="412.40" r="3.60" fill="#5a5a5a" />
<circle cx="788.96" cy="366.20" r="3.70" fill="#5a5a5a" />
<text x="751.36" y="368.70" font-size="6.8" fill="#d8d8d8" text-anchor="start" font-weight="normal" textLength="22.30" lengthAdjust="spacingAndGlyphs" >Shaper</text>
<path d="M775.76,364.9 L779.76,364.9 L777.76,367.6 z" fill="#e0e0e0"/>
<rect x="798.54" y="360.10" width="47.60" height="58.70" rx="3" fill="#212224" stroke="#333539" stroke-width="1" />
<rect x="800.44" y="373.30" width="43.80" height="32.40" rx="3.5" fill="#151515" />
<circle cx="805.04" cy="412.40" r="3.60" fill="#5a5a5a" />
<circle cx="840.84" cy="366.20" r="3.70" fill="#5a5a5a" />
<text x="803.24" y="368.70" font-size="6.8" fill="#d8d8d8" text-anchor="start" font-weight="normal" textLength="22.30" lengthAdjust="spacingAndGlyphs" >Shaper</text>
<path d="M827.64,364.9 L831.64,364.9 L829.64,367.6 z" fill="#e0e0e0"/>
<rect x="850.00" y="359.60" width="47.80" height="59.70" rx="3" fill="#cc1a92" />
<rect x="852.20" y="373.30" width="43.40" height="32.40" rx="3.5" fill="#8c1468" stroke="#5a0a40" stroke-width="0.8" />
<defs><linearGradient id="lgmaster" gradientUnits="userSpaceOnUse" x1="852.60" x2="895.20" y1="0" y2="0"><stop offset="0" stop-color="#b03088"/><stop offset="0.72" stop-color="#b83890"/><stop offset="1" stop-color="#ffffff"/></linearGradient></defs>
<line x1="852.60" y1="389.5" x2="895.20" y2="389.5" stroke="url(#lgmaster)" stroke-width="1"/>
<text x="861.70" y="368.80" font-size="8" fill="#f6dcea" text-anchor="start" font-weight="normal" textLength="23.90" lengthAdjust="spacingAndGlyphs" >Master</text>
<circle cx="893.60" cy="365.60" r="3.70" fill="none" stroke="#5a0a40" stroke-width="1" />
<circle cx="856.40" cy="412.60" r="3.70" fill="#5a5a5a" />
<text x="861.10" y="415.00" font-size="8.3" fill="#f6dcea" text-anchor="start" font-weight="normal" textLength="25.40" lengthAdjust="spacingAndGlyphs" >AHDSR</text>
<rect x="124.80" y="423.60" width="39.40" height="37.20" rx="4" fill="#2a2d33" />
<path d="M134.71,448.75 A10.80,10.80 0 1 1 147.09,448.75" fill="none" stroke="#76787c" stroke-width="1.6"/>
<circle cx="140.90" cy="439.90" r="8.80" fill="#18191b" />
<circle cx="140.90" cy="439.90" r="7.20" fill="url(#kg)" />
<circle cx="137.57" cy="443.87" r="0.94" fill="#e8e8e8" />
<circle cx="158.70" cy="429.20" r="3.10" fill="#f0d000" stroke="#1a1a10" stroke-width="0.5" />
<rect x="164.90" y="423.60" width="40.30" height="37.20" rx="4" fill="#2a2d33" />
<path d="M175.51,448.75 A10.80,10.80 0 1 1 187.89,448.75" fill="none" stroke="#76787c" stroke-width="1.6"/>
<path d="M175.51,448.75 A10.80,10.80 0 0 1 178.90,429.47" fill="none" stroke="#f0d000" stroke-width="1.6"/>
<circle cx="181.70" cy="439.90" r="8.80" fill="#18191b" />
<circle cx="181.70" cy="439.90" r="7.20" fill="url(#kg)" />
<circle cx="180.36" cy="434.89" r="0.94" fill="#e8e8e8" />
<circle cx="199.70" cy="429.20" r="3.10" fill="#f0d000" stroke="#1a1a10" stroke-width="0.5" />
<rect x="124.80" y="462.70" width="39.40" height="37.20" rx="4" fill="#2a2d33" />
<path d="M134.71,488.15 A10.80,10.80 0 1 1 147.09,488.15" fill="none" stroke="#76787c" stroke-width="1.6"/>
<circle cx="140.90" cy="479.30" r="8.80" fill="#18191b" />
<circle cx="140.90" cy="479.30" r="7.20" fill="url(#kg)" />
<circle cx="137.57" cy="483.27" r="0.94" fill="#e8e8e8" />
<circle cx="158.70" cy="468.30" r="3.10" fill="#f0d000" stroke="#1a1a10" stroke-width="0.5" />
<rect x="164.90" y="462.70" width="40.30" height="37.20" rx="4" fill="#2a2d33" />
<path d="M175.51,488.15 A10.80,10.80 0 1 1 187.89,488.15" fill="none" stroke="#76787c" stroke-width="1.6"/>
<circle cx="181.70" cy="479.30" r="8.80" fill="#18191b" />
<circle cx="181.70" cy="479.30" r="7.20" fill="url(#kg)" />
<circle cx="178.37" cy="483.27" r="0.94" fill="#e8e8e8" />
<circle cx="199.70" cy="468.30" r="3.10" fill="#f0d000" stroke="#1a1a10" stroke-width="0.5" />
<rect x="124.80" y="501.60" width="39.40" height="37.20" rx="4" fill="#2a2d33" />
<path d="M134.71,526.45 A10.80,10.80 0 1 1 147.09,526.45" fill="none" stroke="#76787c" stroke-width="1.6"/>
<path d="M134.71,526.45 A10.80,10.80 0 0 1 147.09,508.75" fill="none" stroke="#f0d000" stroke-width="1.6"/>
<circle cx="140.90" cy="517.60" r="8.80" fill="#18191b" />
<circle cx="140.90" cy="517.60" r="7.20" fill="url(#kg)" />
<circle cx="143.87" cy="513.35" r="0.94" fill="#e8e8e8" />
<circle cx="158.70" cy="507.20" r="3.10" fill="#f0d000" stroke="#1a1a10" stroke-width="0.5" />
<rect x="164.90" y="501.60" width="40.30" height="37.20" rx="4" fill="#2a2d33" />
<path d="M175.51,526.45 A10.80,10.80 0 1 1 187.89,526.45" fill="none" stroke="#76787c" stroke-width="1.6"/>
<path d="M175.51,526.45 A10.80,10.80 0 0 1 172.35,512.20" fill="none" stroke="#f0d000" stroke-width="1.6"/>
<circle cx="181.70" cy="517.60" r="8.80" fill="#18191b" />
<circle cx="181.70" cy="517.60" r="7.20" fill="url(#kg)" />
<circle cx="177.21" cy="515.01" r="0.94" fill="#e8e8e8" />
<circle cx="199.70" cy="507.20" r="3.10" fill="#f0d000" stroke="#1a1a10" stroke-width="0.5" />
<text x="127.40" y="458.40" font-size="8.2" fill="#dadada" text-anchor="start" font-weight="normal" textLength="27.10" lengthAdjust="spacingAndGlyphs" stroke="#dadada" stroke-width="0.25">LP Filter</text>
<text x="168.90" y="458.40" font-size="8.2" fill="#dadada" text-anchor="start" font-weight="normal" textLength="23.40" lengthAdjust="spacingAndGlyphs" stroke="#dadada" stroke-width="0.25">Reverb</text>
<text x="127.40" y="496.90" font-size="8.2" fill="#dadada" text-anchor="start" font-weight="normal" textLength="25.40" lengthAdjust="spacingAndGlyphs" stroke="#dadada" stroke-width="0.25">Chorus</text>
<text x="168.90" y="496.90" font-size="8.2" fill="#dadada" text-anchor="start" font-weight="normal" textLength="18.70" lengthAdjust="spacingAndGlyphs" stroke="#dadada" stroke-width="0.25">Drive</text>
<text x="127.40" y="536.00" font-size="8.2" fill="#dadada" text-anchor="start" font-weight="normal" textLength="19.80" lengthAdjust="spacingAndGlyphs" stroke="#dadada" stroke-width="0.25">Delay</text>
<text x="168.90" y="536.00" font-size="8.2" fill="#dadada" text-anchor="start" font-weight="normal" textLength="31.90" lengthAdjust="spacingAndGlyphs" stroke="#dadada" stroke-width="0.25">Compress</text>
<text x="124.20" y="546.60" font-size="6.8" fill="#e2e2e2" text-anchor="start" font-weight="bold" textLength="22.10" lengthAdjust="spacingAndGlyphs" >v1.6.0</text>
<rect x="207.60" y="423.60" width="609.30" height="114.20" rx="4.5" fill="#2a2d33" />
<path d="M225.43,447.72 A7.10,7.10 0 1 1 233.57,447.72" fill="none" stroke="#76787c" stroke-width="1.4"/>
<path d="M225.43,447.72 A7.10,7.10 0 0 1 233.57,436.08" fill="none" stroke="#e0708a" stroke-width="1.4"/>
<circle cx="229.50" cy="441.90" r="6.20" fill="#18191b" />
<circle cx="229.50" cy="441.90" r="4.90" fill="url(#kg)" />
<circle cx="231.77" cy="439.20" r="0.70" fill="#e8e8e8" />
<path d="M252.63,447.72 A7.10,7.10 0 1 1 260.77,447.72" fill="none" stroke="#76787c" stroke-width="1.4"/>
<circle cx="256.70" cy="441.90" r="6.20" fill="#18191b" />
<circle cx="256.70" cy="441.90" r="4.90" fill="url(#kg)" />
<circle cx="254.43" cy="444.60" r="0.70" fill="#e8e8e8" />
<path d="M280.03,447.72 A7.10,7.10 0 1 1 288.17,447.72" fill="none" stroke="#76787c" stroke-width="1.4"/>
<circle cx="284.10" cy="441.90" r="6.20" fill="#18191b" />
<circle cx="284.10" cy="441.90" r="4.90" fill="url(#kg)" />
<circle cx="281.83" cy="444.60" r="0.70" fill="#e8e8e8" />
<path d="M307.23,447.72 A7.10,7.10 0 1 1 315.37,447.72" fill="none" stroke="#76787c" stroke-width="1.4"/>
<path d="M307.23,447.72 A7.10,7.10 0 1 1 315.37,447.72" fill="none" stroke="#e0708a" stroke-width="1.4"/>
<circle cx="311.30" cy="441.90" r="6.20" fill="#18191b" />
<circle cx="311.30" cy="441.90" r="4.90" fill="url(#kg)" />
<circle cx="313.32" cy="444.79" r="0.70" fill="#e8e8e8" />
<text x="229.60" y="458.60" font-size="8.3" fill="#e0e0e0" text-anchor="middle" font-weight="normal" textLength="15.90" lengthAdjust="spacingAndGlyphs" >Rate</text>
<text x="256.90" y="458.60" font-size="8.3" fill="#e0e0e0" text-anchor="middle" font-weight="normal" textLength="14.60" lengthAdjust="spacingAndGlyphs" >Rise</text>
<text x="284.10" y="458.60" font-size="8.3" fill="#e0e0e0" text-anchor="middle" font-weight="normal" textLength="16.30" lengthAdjust="spacingAndGlyphs" >Phase</text>
<text x="311.30" y="458.60" font-size="8.3" fill="#e0e0e0" text-anchor="middle" font-weight="normal" textLength="16.10" lengthAdjust="spacingAndGlyphs" >Gain</text>
<rect x="214.00" y="463.80" width="33.00" height="6.80" rx="0.8" fill="#5f6166" />
<text x="215.60" y="469.50" font-size="6.8" fill="#d8d8d8" text-anchor="start" font-weight="bold" textLength="20.80" lengthAdjust="spacingAndGlyphs" >Normal</text>
<path d="M240.6,466 L243.8,466 L242.2,468.2 z" fill="#e0e0e0"/>
<rect x="217.20" y="476.20" width="25.80" height="9.10" rx="3.5" fill="#e0708a" />
<text x="222.80" y="483.50" font-size="7.5" fill="#5a1c2a" text-anchor="start" font-weight="bold" textLength="14.80" lengthAdjust="spacingAndGlyphs" >Sync</text>
<rect x="253.40" y="476.20" width="36.60" height="9.10" rx="3.5" fill="#66696e" />
<text x="257.20" y="483.50" font-size="7.5" fill="#d4d4d4" text-anchor="start" font-weight="bold" textLength="29.00" lengthAdjust="spacingAndGlyphs" >One Shot</text>
<rect x="299.00" y="476.20" width="25.20" height="9.10" rx="3.5" fill="#66696e" />
<text x="301.20" y="483.50" font-size="7.5" fill="#d4d4d4" text-anchor="start" font-weight="bold" textLength="20.40" lengthAdjust="spacingAndGlyphs" >Bipolar</text>
<rect x="219.90" y="498.00" width="101.10" height="8.00" rx="0.8" fill="#5f6166" />
<text x="221.60" y="505.00" font-size="7.3" fill="#d8d8d8" text-anchor="start" font-weight="normal" textLength="54.70" lengthAdjust="spacingAndGlyphs" >Note On (Legato)</text>
<path d="M315.4,501 L318.8,501 L317.1,503.4 z" fill="#e8e8e8"/>
<text x="244.90" y="515.50" font-size="7.5" fill="#d0d0d0" text-anchor="start" font-weight="normal" textLength="51.50" lengthAdjust="spacingAndGlyphs" >Retrigger Mode</text>
<rect x="333.70" y="430.30" width="37.10" height="8.90" rx="3" fill="#5d6065" />
<rect x="375.50" y="430.30" width="37.10" height="8.90" rx="3" fill="#5d6065" />
<rect x="416.90" y="430.30" width="37.10" height="8.90" rx="3" fill="#5d6065" />
<rect x="622.70" y="430.30" width="37.10" height="8.90" rx="3" fill="#5d6065" />
<text x="336.90" y="437.60" font-size="7.3" fill="#e6e6e6" text-anchor="start" font-weight="normal" textLength="31.50" lengthAdjust="spacingAndGlyphs" >Normalise</text>
<text x="378.00" y="437.60" font-size="7.3" fill="#e6e6e6" text-anchor="start" font-weight="normal" textLength="32.00" lengthAdjust="spacingAndGlyphs" >Remove DC</text>
<text x="425.80" y="437.60" font-size="7.3" fill="#e6e6e6" text-anchor="start" font-weight="normal" textLength="19.20" lengthAdjust="spacingAndGlyphs" >Mirror</text>
<text x="628.00" y="437.60" font-size="7.3" fill="#e6e6e6" text-anchor="start" font-weight="normal" textLength="27.00" lengthAdjust="spacingAndGlyphs" >Export...</text>
<rect x="675.00" y="429.90" width="15.00" height="12.10" rx="2" fill="#66696e" />
<text x="682.50" y="439.50" font-size="9.5" fill="#ececec" text-anchor="middle" font-weight="normal" >2</text>
<text x="692.80" y="439.20" font-size="7.5" fill="#e0e0e0" text-anchor="start" font-weight="normal" textLength="14.50" lengthAdjust="spacingAndGlyphs" >Grid</text>
<rect x="693.00" y="445.20" width="14.30" height="11.70" rx="2" fill="#66696e" />
<text x="700.20" y="454.60" font-size="9.5" fill="#ececec" text-anchor="middle" font-weight="normal" >3</text>
<rect x="332.50" y="444.60" width="356.60" height="83.60" rx="0" fill="#151515" />
<line x1="332.5" y1="471.9" x2="689.1" y2="471.9" stroke="#333333" stroke-width="0.8"/>
<line x1="332.5" y1="500" x2="689.1" y2="500" stroke="#333333" stroke-width="0.8"/>
<line x1="511.4" y1="444.6" x2="511.4" y2="528.2" stroke="#333333" stroke-width="0.8"/>
<path d="M332.5,527.4 L450,527.4 L451,507 L569.2,507 L570,479.3 L689.1,479.3 L689.1,528.2 L332.5,528.2 z" fill="url(#stepg)"/>
<path d="M332.5,527.4 L450,527.4 L451,507 L569.2,507 L570,479.3 L689.1,479.3" fill="none" stroke="#d87888" stroke-width="1.2"/>
<line x1="333.2" y1="444.6" x2="333.2" y2="529.2" stroke="#f08a10" stroke-width="1.5"/>
<rect x="332.50" y="529.00" width="12.70" height="8.00" rx="1.5" fill="#f08a10" />
<text x="338.80" y="535.30" font-size="5" fill="#3a1a00" text-anchor="middle" font-weight="normal" textLength="10.00" lengthAdjust="spacingAndGlyphs" >Loop</text>
<path d="M739.51,444.89 A6.95,6.95 0 1 1 747.49,444.89" fill="none" stroke="#76787c" stroke-width="1.3"/>
<circle cx="743.50" cy="439.20" r="6.00" fill="#18191b" />
<circle cx="743.50" cy="439.20" r="4.90" fill="url(#kg)" />
<circle cx="741.23" cy="441.90" r="0.70" fill="#e8e8e8" />
<path d="M788.71,444.89 A6.95,6.95 0 1 1 796.69,444.89" fill="none" stroke="#76787c" stroke-width="1.3"/>
<circle cx="792.70" cy="439.20" r="6.00" fill="#18191b" />
<circle cx="792.70" cy="439.20" r="4.90" fill="url(#kg)" />
<circle cx="790.43" cy="441.90" r="0.70" fill="#e8e8e8" />
<path d="M789.02,445.09 A6.95,6.95 0 0 1 787.87,444.20" fill="none" stroke="#e0708a" stroke-width="1.4"/>
<text x="743.50" y="453.80" font-size="7" fill="#d8d8d8" text-anchor="middle" font-weight="normal" textLength="21.10" lengthAdjust="spacingAndGlyphs" >Window</text>
<text x="792.50" y="453.80" font-size="7" fill="#d8d8d8" text-anchor="middle" font-weight="normal" textLength="21.00" lengthAdjust="spacingAndGlyphs" >Smooth</text>
<rect x="693.10" y="463.80" width="119.50" height="63.50" rx="0" fill="#151515" />
<rect x="693.10" y="463.80" width="39.80" height="16.00" rx="0" fill="#a45a68" />
<path d="M693.1,479.8 L732.9,463.8" fill="none" stroke="#2a1418" stroke-width="1.0" stroke-linejoin="round"/>
<path d="M732.9,463.8 L772.5,479.8" fill="none" stroke="#d87888" stroke-width="1.1" stroke-linejoin="round"/>
<path d="M772.5,471.5 L812.6,471.5" fill="none" stroke="#d87888" stroke-width="1.1" stroke-linejoin="round"/>
<path d="M693.1,495.5 L713.0,479.8 L732.9,495.5" fill="none" stroke="#d87888" stroke-width="1.1" stroke-linejoin="round"/>
<path d="M732.9,479.8 L752.7,495.5 L772.5,479.8" fill="none" stroke="#d87888" stroke-width="1.1" stroke-linejoin="round"/>
<path d="M772.50,495.50 L773.84,495.33 L775.17,494.82 L776.51,494.00 L777.85,492.90 L779.18,491.57 L780.52,490.08 L781.86,488.47 L783.19,486.83 L784.53,485.22 L785.87,483.73 L787.20,482.40 L788.54,481.30 L789.88,480.48 L791.21,479.97 L792.55,479.80 L793.89,479.97 L795.22,480.48 L796.56,481.30 L797.90,482.40 L799.23,483.73 L800.57,485.22 L801.91,486.83 L803.24,488.47 L804.58,490.08 L805.92,491.57 L807.25,492.90 L808.59,494.00 L809.93,494.82 L811.26,495.33 L812.60,495.50" fill="none" stroke="#d87888" stroke-width="1.1" stroke-linejoin="round"/>
<path d="M693.10,495.50 L694.43,495.68 L695.75,496.20 L697.08,497.04 L698.41,498.16 L699.73,499.52 L701.06,501.06 L702.39,502.71 L703.71,504.39 L705.04,506.04 L706.37,507.57 L707.69,508.94 L709.02,510.06 L710.35,510.90 L711.67,511.42 L713.00,511.60 L714.33,511.42 L715.65,510.90 L716.98,510.06 L718.31,508.94 L719.63,507.58 L720.96,506.04 L722.29,504.39 L723.61,502.71 L724.94,501.06 L726.27,499.52 L727.59,498.16 L728.92,497.04 L730.25,496.20 L731.57,495.68 L732.90,495.50" fill="none" stroke="#d87888" stroke-width="1.1" stroke-linejoin="round"/>
<path d="M732.90,511.60 L734.22,511.56 L735.54,511.42 L736.86,511.21 L738.18,510.90 L739.50,510.52 L740.82,510.06 L742.14,509.53 L743.46,508.94 L744.78,508.28 L746.10,507.58 L747.42,506.82 L748.74,506.04 L750.06,505.22 L751.38,504.39 L752.70,503.55 L754.02,502.71 L755.34,501.88 L756.66,501.06 L757.98,500.28 L759.30,499.53 L760.62,498.82 L761.94,498.16 L763.26,497.57 L764.58,497.04 L765.90,496.58 L767.22,496.20 L768.54,495.89 L769.86,495.68 L771.18,495.54 L772.50,495.50" fill="none" stroke="#d87888" stroke-width="1.1" stroke-linejoin="round"/>
<path d="M772.50,495.50 L773.84,495.54 L775.17,495.68 L776.51,495.89 L777.85,496.20 L779.18,496.58 L780.52,497.04 L781.86,497.57 L783.19,498.16 L784.53,498.82 L785.87,499.52 L787.20,500.28 L788.54,501.06 L789.88,501.88 L791.21,502.71 L792.55,503.55 L793.89,504.39 L795.22,505.22 L796.56,506.04 L797.90,506.82 L799.23,507.57 L800.57,508.28 L801.91,508.94 L803.24,509.53 L804.58,510.06 L805.92,510.52 L807.25,510.90 L808.59,511.21 L809.93,511.42 L811.26,511.56 L812.60,511.60" fill="none" stroke="#d87888" stroke-width="1.1" stroke-linejoin="round"/>
<path d="M693.10,527.30 L694.43,527.24 L695.75,527.17 L697.08,527.10 L698.41,527.01 L699.73,526.91 L701.06,526.80 L702.39,526.68 L703.71,526.55 L705.04,526.39 L706.37,526.22 L707.69,526.02 L709.02,525.81 L710.35,525.56 L711.67,525.29 L713.00,524.98 L714.33,524.63 L715.65,524.24 L716.98,523.80 L718.31,523.30 L719.63,522.75 L720.96,522.12 L722.29,521.42 L723.61,520.63 L724.94,519.75 L726.27,518.75 L727.59,517.64 L728.92,516.38 L730.25,514.97 L731.57,513.38 L732.90,511.60" fill="none" stroke="#d87888" stroke-width="1.1" stroke-linejoin="round"/>
<path d="M732.90,511.60 L734.22,513.38 L735.54,514.97 L736.86,516.38 L738.18,517.64 L739.50,518.75 L740.82,519.75 L742.14,520.63 L743.46,521.42 L744.78,522.12 L746.10,522.75 L747.42,523.30 L748.74,523.80 L750.06,524.24 L751.38,524.63 L752.70,524.98 L754.02,525.29 L755.34,525.56 L756.66,525.81 L757.98,526.02 L759.30,526.22 L760.62,526.39 L761.94,526.55 L763.26,526.68 L764.58,526.80 L765.90,526.91 L767.22,527.01 L768.54,527.10 L769.86,527.17 L771.18,527.24 L772.50,527.30" fill="none" stroke="#d87888" stroke-width="1.1" stroke-linejoin="round"/>
<path d="M772.50,518.78 L773.13,516.18 L773.75,523.03 L774.38,514.81 L775.01,521.60 L775.63,519.36 L776.26,514.54 L776.89,521.24 L777.51,514.11 L778.14,520.28 L778.77,514.77 L779.39,515.15 L780.02,520.15 L780.65,525.12 L781.27,515.73 L781.90,517.32 L782.52,522.74 L783.15,526.51 L783.78,522.12 L784.40,519.78 L785.03,526.83 L785.66,514.30 L786.28,525.49 L786.91,518.29 L787.54,516.07 L788.16,515.63 L788.79,518.56 L789.42,525.00 L790.04,516.66 L790.67,522.17 L791.30,522.88 L791.92,519.45 L792.55,521.75 L793.18,514.63 L793.80,514.57 L794.43,517.06 L795.06,523.39 L795.68,520.19 L796.31,518.64 L796.94,522.22 L797.56,520.53 L798.19,518.44 L798.82,524.75 L799.44,523.61 L800.07,517.63 L800.70,522.08 L801.32,521.46 L801.95,525.68 L802.58,523.98 L803.20,518.27 L803.83,526.88 L804.45,515.63 L805.08,520.07 L805.71,524.31 L806.33,516.20 L806.96,521.00 L807.59,514.15 L808.21,523.24 L808.84,524.39 L809.47,522.07 L810.09,525.69 L810.72,518.64 L811.35,523.57 L811.97,522.33 L812.60,522.15" fill="none" stroke="#e08090" stroke-width="0.9" stroke-linejoin="round"/>
<line x1="693.1" y1="463.8" x2="693.1" y2="527.3" stroke="#d87888" stroke-width="1.2"/>
<line x1="732.9" y1="463.8" x2="732.9" y2="527.3" stroke="#d87888" stroke-width="1.2"/>
<line x1="772.5" y1="463.8" x2="772.5" y2="527.3" stroke="#d87888" stroke-width="1.2"/>
<line x1="812.6" y1="463.8" x2="812.6" y2="527.3" stroke="#d87888" stroke-width="1.2"/>
<line x1="693.1" y1="463.8" x2="812.6" y2="463.8" stroke="#d87888" stroke-width="1.2"/>
<line x1="693.1" y1="479.8" x2="812.6" y2="479.8" stroke="#d87888" stroke-width="1.2"/>
<line x1="693.1" y1="495.5" x2="812.6" y2="495.5" stroke="#d87888" stroke-width="1.2"/>
<line x1="693.1" y1="511.6" x2="812.6" y2="511.6" stroke="#d87888" stroke-width="1.2"/>
<line x1="693.1" y1="527.3" x2="812.6" y2="527.3" stroke="#d87888" stroke-width="1.2"/>
<rect x="819.80" y="423.70" width="78.00" height="11.50" rx="1" fill="#2c3038" />
<circle cx="826.10" cy="429.30" r="3.20" fill="#575757" />
<text x="832.40" y="432.00" font-size="7.5" fill="#dca016" text-anchor="start" font-weight="bold" textLength="62.10" lengthAdjust="spacingAndGlyphs" >Keyboard Tracking</text>
<rect x="819.80" y="436.73" width="78.00" height="11.50" rx="1" fill="#2c3038" />
<circle cx="826.10" cy="442.33" r="3.20" fill="#575757" />
<text x="832.40" y="445.03" font-size="7.5" fill="#dca016" text-anchor="start" font-weight="bold" textLength="56.30" lengthAdjust="spacingAndGlyphs" >Note On Velocity</text>
<rect x="819.80" y="449.76" width="78.00" height="11.50" rx="1" fill="#2c3038" />
<circle cx="826.10" cy="455.36" r="3.20" fill="#575757" />
<text x="832.40" y="458.06" font-size="7.5" fill="#dca016" text-anchor="start" font-weight="bold" textLength="56.80" lengthAdjust="spacingAndGlyphs" >Note Off Velocity</text>
<rect x="819.80" y="462.79" width="78.00" height="11.50" rx="1" fill="#2c3038" />
<circle cx="826.10" cy="468.39" r="3.20" fill="#575757" />
<text x="832.40" y="471.09" font-size="7.5" fill="#dca016" text-anchor="start" font-weight="bold" textLength="60.00" lengthAdjust="spacingAndGlyphs" >Modulation Wheel</text>
<rect x="819.80" y="475.82" width="78.00" height="11.50" rx="1" fill="#2c3038" />
<circle cx="826.10" cy="481.42" r="3.20" fill="#575757" />
<text x="832.40" y="484.12" font-size="7.5" fill="#dca016" text-anchor="start" font-weight="bold" textLength="38.60" lengthAdjust="spacingAndGlyphs" >After Touch</text>
<rect x="819.80" y="488.85" width="78.00" height="11.50" rx="1" fill="#2c3038" />
<circle cx="826.10" cy="494.45" r="3.20" fill="#575757" />
<text x="832.40" y="497.15" font-size="7.5" fill="#dca016" text-anchor="start" font-weight="bold" textLength="57.00" lengthAdjust="spacingAndGlyphs" >Expression Pedal</text>
<rect x="819.80" y="501.88" width="78.00" height="11.50" rx="1" fill="#2c3038" />
<circle cx="826.10" cy="507.48" r="3.20" fill="#575757" />
<text x="832.40" y="510.18" font-size="7.5" fill="#dca016" text-anchor="start" font-weight="bold" textLength="33.00" lengthAdjust="spacingAndGlyphs" >MPE Slide</text>
<rect x="846.70" y="517.90" width="34.50" height="8.00" rx="0.8" fill="#66696e" />
<text x="848.40" y="524.60" font-size="7.5" fill="#e0e0e0" text-anchor="start" font-weight="bold" textLength="16.60" lengthAdjust="spacingAndGlyphs" >Mono</text>
<path d="M874.6,520.6 L878,520.6 L876.3,522.9 z" fill="#eeeeee"/>
<text x="857.00" y="535.00" font-size="7.5" fill="#e8e8e8" text-anchor="middle" font-weight="normal" >0</text>
<text x="865.50" y="535.00" font-size="7.5" fill="#e8e8e8" text-anchor="start" font-weight="normal" textLength="10.00" lengthAdjust="spacingAndGlyphs" >/ 3</text>
<rect x="843.60" y="541.10" width="19.90" height="7.80" rx="3" fill="#3a3c40" />
<rect x="865.40" y="541.10" width="20.10" height="7.80" rx="3" fill="#3a3c40" />
<text x="853.50" y="547.60" font-size="6.8" fill="#74767a" text-anchor="middle" font-weight="normal" textLength="15.00" lengthAdjust="spacingAndGlyphs" >Undo</text>
<text x="875.40" y="547.60" font-size="6.8" fill="#74767a" text-anchor="middle" font-weight="normal" textLength="14.40" lengthAdjust="spacingAndGlyphs" >Redo</text>
<line x1="896.0" y1="550.3" x2="905.8" y2="540.5" stroke="#6a6a6a" stroke-width="0.7"/>
<line x1="898.2" y1="550.3" x2="905.8" y2="542.7" stroke="#6a6a6a" stroke-width="0.7"/>
<line x1="900.4" y1="550.3" x2="905.8" y2="544.9" stroke="#6a6a6a" stroke-width="0.7"/>
<line x1="902.6" y1="550.3" x2="905.8" y2="547.1" stroke="#6a6a6a" stroke-width="0.7"/>
<path d="M194.6,268.59999999999997 C204.6,266.65599999999995 218.5,260.5 219,252.4" fill="none" stroke="#a4c43c" stroke-width="1.2" stroke-linecap="round"/>
<circle cx="194.60" cy="268.60" r="3.60" fill="#a4c43c" />
<path d="M194.6,284.4 C204.6,280.56 218.5,268.4 219,252.4" fill="none" stroke="#4cc46c" stroke-width="1.2" stroke-linecap="round"/>
<circle cx="194.60" cy="284.40" r="3.60" fill="#4cc46c" />
<path d="M194.6,300.2 C204.6,294.464 218.5,276.3 219,252.4" fill="none" stroke="#4a9ad4" stroke-width="1.2" stroke-linecap="round"/>
<circle cx="194.60" cy="300.20" r="3.60" fill="#4a9ad4" />
<path d="M194.6,315.99999999999994 C204.6,308.36799999999994 218.5,284.2 219,252.4" fill="none" stroke="#8a4ad4" stroke-width="1.2" stroke-linecap="round"/>
<circle cx="194.60" cy="316.00" r="3.60" fill="#8a4ad4" />
<path d="M194.6,331.79999999999995 C204.6,322.27199999999993 218.5,292.09999999999997 219,252.4" fill="none" stroke="#d44a9a" stroke-width="1.2" stroke-linecap="round"/>
<circle cx="194.60" cy="331.80" r="3.60" fill="#d44a9a" />
<path d="M194.6,347.59999999999997 C204.6,336.176 218.5,300.0 219,252.4" fill="none" stroke="#d4844a" stroke-width="1.2" stroke-linecap="round"/>
<circle cx="194.60" cy="347.60" r="3.60" fill="#d4844a" />
<path d="M399.9,252.6 C538.3,299.2 687.6,314.3 830.2,269.2" fill="none" stroke="#5b8fc0" stroke-width="1.3" stroke-linecap="round"/>
<circle cx="830.10" cy="268.70" r="3.60" fill="#5b8fc0" />
<line x1="893" y1="268.6" x2="893" y2="362" stroke="#c8188e" stroke-width="1.4"/>
<circle cx="893.00" cy="268.70" r="3.60" fill="#c8188e" />
<circle cx="893.00" cy="284.50" r="3.60" fill="#c8188e" />
<circle cx="893.00" cy="300.30" r="3.60" fill="#c8188e" />
<circle cx="893.00" cy="316.10" r="3.60" fill="#c8188e" />
<circle cx="893.00" cy="331.90" r="3.60" fill="#c8188e" />
<circle cx="893.00" cy="347.70" r="3.60" fill="#c8188e" />
<path d="M321.60,366.00 L323.99,366.80 L326.38,367.53 L328.78,368.21 L331.17,368.82 L333.56,369.37 L335.95,369.86 L338.35,370.29 L340.74,370.66 L343.13,370.97 L345.52,371.22 L347.92,371.41 L350.31,371.55 L352.70,371.62 L355.09,371.63 L357.49,371.58 L359.88,371.48 L362.27,371.31 L364.66,371.09 L367.06,370.80 L369.45,370.46 L371.84,370.05 L374.23,369.59 L376.63,369.06 L379.02,368.48 L381.41,367.83 L383.80,367.12 L386.19,366.35 L388.59,365.52 L390.98,364.62 L393.37,363.66 L395.76,362.63 L398.16,361.54 L400.55,360.38 L402.94,359.16 L405.33,357.87 L407.73,356.51 L410.12,355.09 L412.51,353.59 L414.90,352.03 L417.30,350.39 L419.69,348.68 L422.08,346.89 L424.47,345.03 L426.87,343.10 L429.26,341.09 L431.65,339.00 L434.04,336.83 L436.44,334.58 L438.83,332.25 L441.22,329.84 L443.61,327.34 L446.01,324.76 L448.40,322.09 L450.79,319.33 L453.18,316.48 L455.57,313.54 L457.97,310.51 L460.36,307.38 L462.75,304.16 L465.14,300.83 L467.54,297.41 L469.93,293.89 L472.32,290.26 L474.71,286.52 L477.11,282.68 L479.50,278.73 L481.89,274.67 L484.28,270.50 L486.68,266.21 L489.07,261.80 L491.46,257.27 L493.85,252.63 L496.25,247.85 L498.64,242.96 L501.03,237.93 L503.42,232.78 L505.82,227.49 L508.21,222.06 L510.60,216.50" fill="none" stroke="#c060c0" stroke-width="1.2" stroke-linejoin="round" stroke-linecap="round"/>
<path d="M159.10,429.10 L163.55,430.93 L168.00,432.65 L172.45,434.24 L176.90,435.73 L181.35,437.10 L185.80,438.36 L190.25,439.50 L194.69,440.54 L199.14,441.47 L203.59,442.28 L208.04,442.99 L212.49,443.58 L216.94,444.07 L221.39,444.45 L225.84,444.73 L230.29,444.90 L234.74,444.96 L239.19,444.91 L243.64,444.76 L248.09,444.50 L252.54,444.14 L256.99,443.66 L261.44,443.09 L265.88,442.40 L270.33,441.61 L274.78,440.72 L279.23,439.72 L283.68,438.61 L288.13,437.39 L292.58,436.06 L297.03,434.63 L301.48,433.09 L305.93,431.43 L310.38,429.67 L314.83,427.80 L319.28,425.82 L323.73,423.72 L328.18,421.51 L332.63,419.19 L337.07,416.75 L341.52,414.20 L345.97,411.53 L350.42,408.74 L354.87,405.83 L359.32,402.80 L363.77,399.66 L368.22,396.38 L372.67,392.99 L377.12,389.47 L381.57,385.82 L386.02,382.05 L390.47,378.14 L394.92,374.10 L399.37,369.93 L403.82,365.63 L408.26,361.19 L412.71,356.61 L417.16,351.89 L421.61,347.02 L426.06,342.02 L430.51,336.86 L434.96,331.56 L439.41,326.11 L443.86,320.51 L448.31,314.75 L452.76,308.83 L457.21,302.76 L461.66,296.52 L466.11,290.12 L470.56,283.55 L475.01,276.81 L479.45,269.90 L483.90,262.82 L488.35,255.56 L492.80,248.12 L497.25,240.50 L501.70,232.69 L506.15,224.69 L510.60,216.50" fill="none" stroke="#d0ac00" stroke-width="1.15" stroke-linejoin="round" stroke-linecap="round"/>
<path d="M159.10,429.10 L164.37,430.93 L169.64,432.66 L174.91,434.28 L180.18,435.80 L185.45,437.20 L190.72,438.50 L195.99,439.70 L201.26,440.79 L206.53,441.77 L211.80,442.64 L217.07,443.41 L222.34,444.07 L227.61,444.62 L232.87,445.06 L238.14,445.40 L243.41,445.63 L248.68,445.75 L253.95,445.76 L259.22,445.66 L264.49,445.45 L269.76,445.13 L275.03,444.71 L280.30,444.17 L285.57,443.52 L290.84,442.76 L296.11,441.89 L301.38,440.90 L306.65,439.80 L311.92,438.59 L317.19,437.27 L322.46,435.83 L327.73,434.27 L333.00,432.60 L338.27,430.82 L343.54,428.91 L348.81,426.89 L354.08,424.76 L359.35,422.50 L364.62,420.12 L369.88,417.63 L375.15,415.01 L380.42,412.27 L385.69,409.41 L390.96,406.42 L396.23,403.31 L401.50,400.08 L406.77,396.72 L412.04,393.23 L417.31,389.61 L422.58,385.87 L427.85,382.00 L433.12,377.99 L438.39,373.86 L443.66,369.59 L448.93,365.19 L454.20,360.65 L459.47,355.98 L464.74,351.17 L470.01,346.23 L475.28,341.14 L480.55,335.92 L485.82,330.55 L491.09,325.04 L496.36,319.39 L501.63,313.59 L506.89,307.65 L512.16,301.56 L517.43,295.32 L522.70,288.93 L527.97,282.39 L533.24,275.70 L538.51,268.85 L543.78,261.85 L549.05,254.69 L554.32,247.38 L559.59,239.90 L564.86,232.26 L570.13,224.46 L575.40,216.50" fill="none" stroke="#d0ac00" stroke-width="1.15" stroke-linejoin="round" stroke-linecap="round"/>
<circle cx="159.10" cy="429.20" r="3.10" fill="#f0d000" stroke="#1a1a10" stroke-width="0.5" />
<circle cx="511.20" cy="216.60" r="1.90" fill="#f0d000" />
<circle cx="575.40" cy="216.60" r="1.90" fill="#f0d000" />
<circle cx="321.60" cy="366.20" r="3.60" fill="#d878d0" stroke="#3a1a30" stroke-width="0.9" />
</svg></body></html>
